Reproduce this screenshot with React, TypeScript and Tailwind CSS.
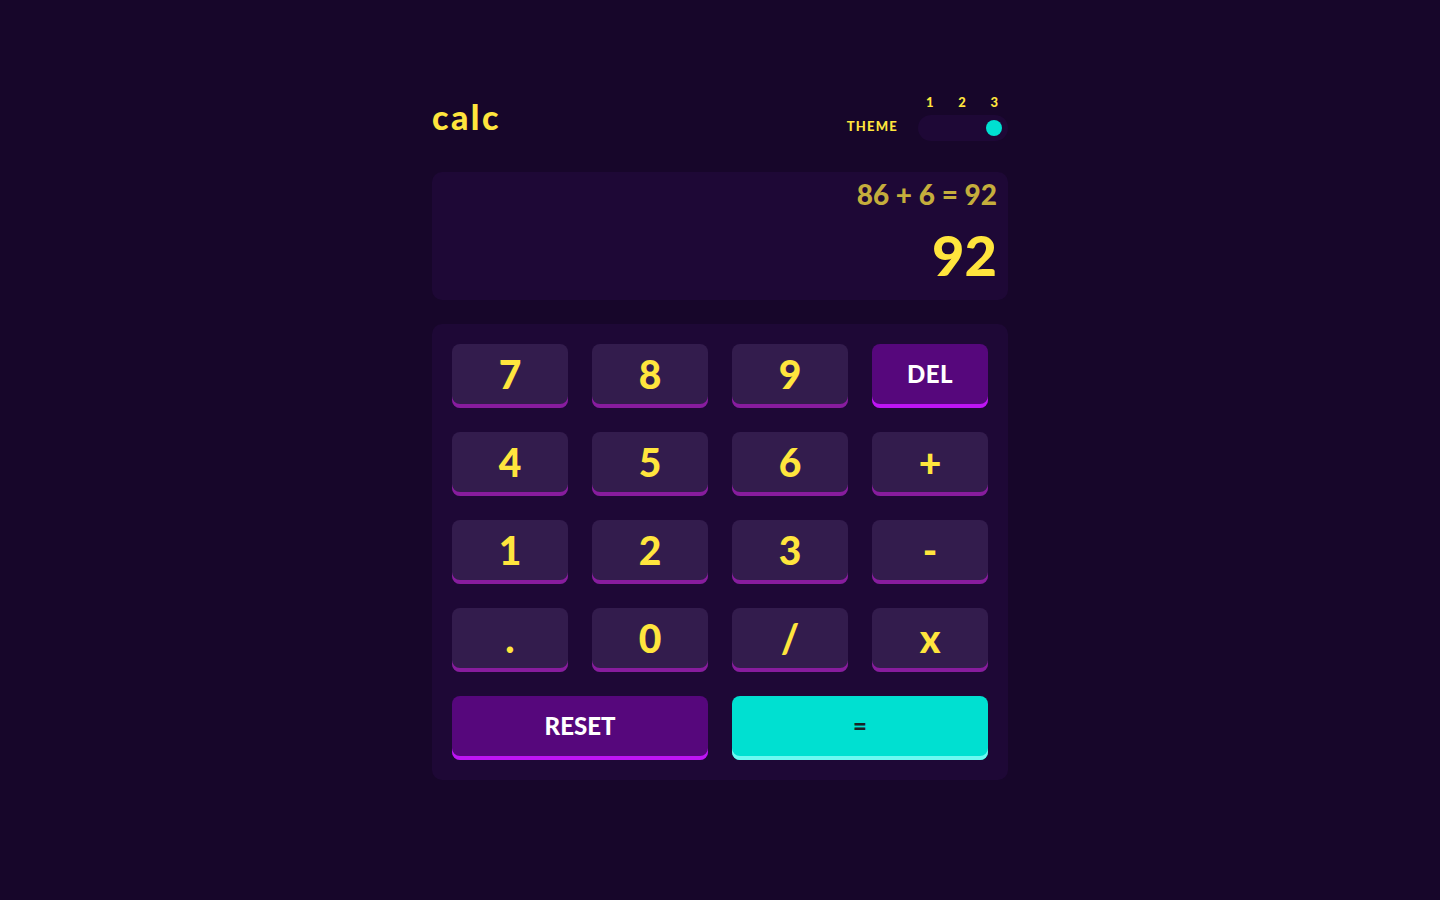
import React from "react";

const font = { fontFamily: "Lato, 'Noto Sans', sans-serif" };

type K = { label: string; kind?: "num" | "del" | "eq" };

const rows: K[][] = [
  [{ label: "7" }, { label: "8" }, { label: "9" }, { label: "DEL", kind: "del" }],
  [{ label: "4" }, { label: "5" }, { label: "6" }, { label: "+" }],
  [{ label: "1" }, { label: "2" }, { label: "3" }, { label: "-" }],
  [{ label: "." }, { label: "0" }, { label: "/" }, { label: "x" }],
];

function Key({ k, wide }: { k: K; wide?: boolean }) {
  if (k.kind === "del") {
    return (
      <button className="h-[64px] rounded-[8px] bg-[#56077c] shadow-[inset_0_-4px_0_#be15f4] pb-[4px] flex items-center justify-center text-white text-[24px] font-black tracking-[0.5px] leading-none">
        {k.label}
      </button>
    );
  }
  if (k.kind === "eq") {
    return (
      <button className={`h-[64px] rounded-[8px] bg-[#00e0d1] shadow-[inset_0_-4px_0_#6cf9f1] pb-[4px] flex items-center justify-center text-[#1a2327] text-[24px] font-black leading-none ${wide ? "col-span-2" : ""}`}>
        {k.label}
      </button>
    );
  }
  return (
    <button className="h-[64px] rounded-[8px] bg-[#331c4d] shadow-[inset_0_-4px_0_#881c9e] pb-[4px] flex items-center justify-center text-[#ffe53d] text-[39px] font-black leading-none">
      {k.label}
    </button>
  );
}

export default function App() {
  return (
    <div className="min-h-[900px] w-full bg-[#17062a]" style={font}>
      <div className="mx-auto w-[576px] pt-[94px]">
        <div className="flex items-end justify-between h-[47px]">
          <div className="text-[34px] font-black text-[#ffe53d] leading-none pb-[7px] tracking-[2.5px]">calc</div>
          <div className="flex items-end gap-[20px]">
            <div className="text-[13px] font-black text-[#ffe53d] tracking-[1.2px] leading-none pb-[8px]">THEME</div>
            <div className="flex flex-col w-[90px]">
              <div className="flex justify-between pl-[8px] pr-[10px] text-[13px] font-black text-[#ffe53d] leading-none h-[16px] pt-[2px]">
                <span>1</span>
                <span>2</span>
                <span>3</span>
              </div>
              <div className="mt-[5px] h-[26px] rounded-full bg-[#1e0836] flex items-center justify-end pl-[5px] pr-[6px]">
                <div className="w-[16px] h-[16px] rounded-full bg-[#00e0d1]" />
              </div>
            </div>
          </div>
        </div>

        <div className="mt-[31px] h-[128px] rounded-[10px] bg-[#1e0836] flex flex-col items-end px-[11px] pt-[8px]">
          <div className="text-[28px] font-black text-[#c5ae3c] leading-none">86 + 6 = 92</div>
          <div className="text-[56px] font-black text-[#ffe53d] leading-none mt-[19px]">92</div>
        </div>

        <div className="mt-[24px] rounded-[10px] bg-[#1e0836] p-[20px] grid grid-cols-4 gap-x-[24px] gap-y-[24px]">
          {rows.flat().map((k, i) => (
            <Key key={i} k={k} />
          ))}
          <button className="col-span-2 h-[64px] rounded-[8px] bg-[#56077c] shadow-[inset_0_-4px_0_#be15f4] pb-[4px] flex items-center justify-center text-white text-[24px] font-black leading-none">
            RESET
          </button>
          <Key k={{ label: "=", kind: "eq" }} wide />
        </div>
      </div>
    </div>
  );
}
